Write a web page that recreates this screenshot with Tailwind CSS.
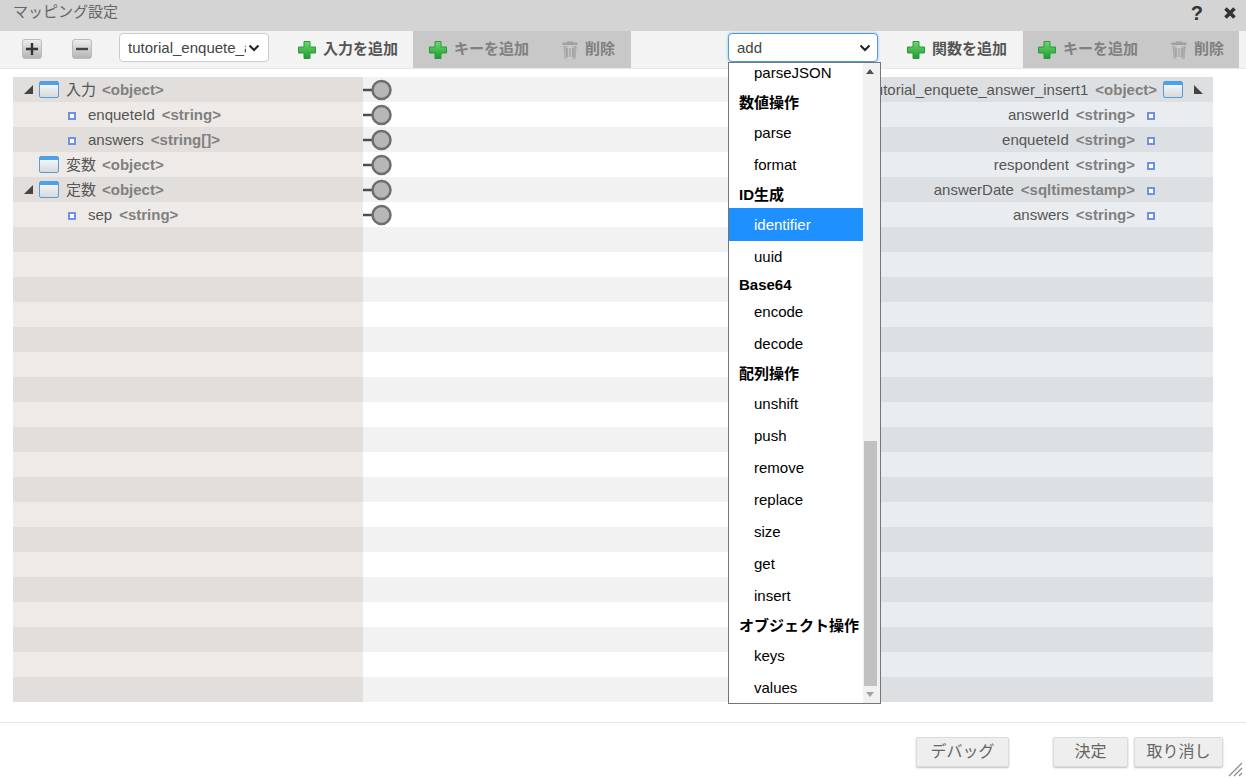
<!DOCTYPE html>
<html lang="ja">

<head>
  <meta charset="UTF-8" />
  <title>マッピング設定</title>
  <script src="https://cdn.jsdelivr.net/npm/@tailwindcss/browser@4"></script>
</head>

<body class="bg-white">
  <svg class="absolute w-0 h-0">
    <defs>
      <linearGradient id="plusFill" x1="0" y1="0" x2="0" y2="1">
        <stop offset="0" stop-color="#6fd86a" />
        <stop offset="1" stop-color="#1d9a35" />
      </linearGradient>
      <linearGradient id="winFill" x1="0" y1="0" x2="0" y2="1">
        <stop offset="0" stop-color="#fbfcfd" />
        <stop offset="1" stop-color="#d5d9dd" />
      </linearGradient>
      <linearGradient id="trashFill" x1="0" y1="0" x2="1" y2="0">
        <stop offset="0" stop-color="#a5a5a5" />
        <stop offset="0.5" stop-color="#d3d3d3" />
        <stop offset="1" stop-color="#a0a0a0" />
      </linearGradient>
      <symbol id="plus" viewBox="0 0 18 18">
        <path d="M6 .5h6v5.500h5.500v6H12v5.500H6V12H.5V6H6z" fill="url(#plusFill)" stroke="#2a9a3a" stroke-width="1" />
      </symbol>
      <symbol id="trash" viewBox="0 0 18 18">
        <path d="M6 1.500V.5h6v1h4.500V4h-15V1.500z" fill="#a0a0a0" />
        <path d="M2.500 5h13l-1 13h-11z" fill="url(#trashFill)" />
        <path d="M6 7v9M9 7v9M12 7v9" stroke="#8f8f8f" stroke-width="1" />
      </symbol>
      <symbol id="win" viewBox="0 0 20 17">
        <rect x="0.500" y="0.500" width="19" height="16" rx="1.500" fill="url(#winFill)" stroke="#5b9bd5" />
        <rect x="1" y="1" width="18" height="3" fill="#4aa3ea" />
      </symbol>
      <symbol id="sq" viewBox="0 0 8 8">
        <rect x="1" y="1" width="6" height="6" fill="#fff" stroke="#6f8fe8" stroke-width="2" />
      </symbol>
      <symbol id="knob" viewBox="0 0 29 22">
        <path d="M0 11h10" stroke="#4a5052" stroke-width="2.500" />
        <circle cx="18.500" cy="11" r="9" fill="#b7b7b7" stroke="#6e6e6e" stroke-width="2.500" />
      </symbol>
    </defs>
  </svg>

  <div class="w-[1246px] h-[780px] relative overflow-hidden font-['Liberation_Sans','Noto_Sans_CJK_JP',sans-serif] text-[15px] text-[#555]">

    <!-- Title bar -->
    <div class="h-[31px] bg-[#d4d4d4] flex items-center pl-[13px] pb-[9px]">
      <span class="text-[15px] text-[#666] leading-none">マッピング設定</span>
      <span class="ml-auto mr-[20px] text-[20px] font-bold text-[#333] leading-none mt-[3px]">?</span>
      <svg class="w-[14px] h-[14px] mr-[9px] mt-[3px]" viewBox="0 0 14 14"><path d="M2.500 2.500l9 9M11.500 2.500l-9 9" stroke="#333" stroke-width="3.600" /></svg>
    </div>

    <!-- Toolbar -->
    <div class="h-[38px] bg-[#f3f3f3] border-b border-[#e8e8e8] flex items-start font-bold">
      <button class="ml-[22px] mt-[8px] w-[20px] h-[20px] rounded-[3px] bg-gradient-to-b from-[#eeeeee] to-[#b4b4b4] border border-[#bbb] flex items-center justify-center">
        <svg class="w-[12px] h-[12px]" viewBox="0 0 12 12"><path d="M6 0v12M0 6h12" stroke="#333" stroke-width="2.400" /></svg>
      </button>
      <button class="ml-[30px] mt-[8px] w-[20px] h-[20px] rounded-[3px] bg-gradient-to-b from-[#eeeeee] to-[#b4b4b4] border border-[#bbb] flex items-center justify-center">
        <svg class="w-[12px] h-[12px]" viewBox="0 0 12 12"><path d="M0 6h12" stroke="#444" stroke-width="2.400" /></svg>
      </button>
      <div class="ml-[27px] mt-[2px] w-[150px] h-[29px] bg-white border border-[#ccc] rounded-[4px] flex items-center pl-[8px] font-normal text-[#444] overflow-hidden">
        <span class="w-[118px] overflow-hidden whitespace-nowrap pt-[1px]">tutorial_enquete_answer</span>
        <svg class="w-[12px] h-[8px] ml-[2px]" viewBox="0 0 12 8"><path d="M1.500 1.500L6 6l4.500-4.500" fill="none" stroke="#222" stroke-width="2" /></svg>
      </div>
      <div class="ml-[29px] w-[115px] h-[37px] flex items-center">
        <svg class="w-[18px] h-[18px] mr-[7px]"><use href="#plus" /></svg>
        <span class="text-[#555]">入力を追加</span>
      </div>
      <div class="w-[218px] h-[37px] bg-[#c8c8c8] flex items-center pl-[16px] text-[#808080]">
        <svg class="w-[18px] h-[18px] mr-[7px]"><use href="#plus" /></svg>
        <span>キーを追加</span>
        <svg class="w-[18px] h-[18px] ml-[32px] mr-[6px]"><use href="#trash" /></svg>
        <span>削除</span>
      </div>
      <div class="ml-[97px] mt-[2px] w-[150px] h-[29px] bg-white border border-[#4a9be8] shadow-[0_0_3px_#8cc4f5] rounded-[4px] flex items-center pl-[8px] pr-[6px] font-normal text-[#444]">
        <span class="pt-[1px]">add</span>
        <svg class="w-[12px] h-[8px] ml-auto" viewBox="0 0 12 8"><path d="M1.500 1.500L6 6l4.500-4.500" fill="none" stroke="#222" stroke-width="2" /></svg>
      </div>
      <div class="ml-[29px] w-[116px] h-[37px] flex items-center">
        <svg class="w-[18px] h-[18px] mr-[7px]"><use href="#plus" /></svg>
        <span class="text-[#555]">関数を追加</span>
      </div>
      <div class="w-[216px] h-[37px] bg-[#c8c8c8] flex items-center pl-[15px] text-[#808080]">
        <svg class="w-[18px] h-[18px] mr-[7px]"><use href="#plus" /></svg>
        <span>キーを追加</span>
        <svg class="w-[18px] h-[18px] ml-[32px] mr-[6px]"><use href="#trash" /></svg>
        <span>削除</span>
      </div>
    </div>

    <!-- Mapping rows -->
    <div class="mt-[8px] mx-[13px] w-[1200px] flex flex-col">
      <div class="group flex h-[25px]">
        <div class="w-[350px] flex items-center pt-[2px] bg-[#eeeae7] group-odd:bg-[#e2dedb]">
          <svg class="w-[9px] h-[9px] ml-[11px] mr-[6px] -mt-[2px]" viewBox="0 0 9 9"><path d="M9 0v9H0z" fill="#444" /></svg>
          <svg class="w-[20px] h-[17px] mr-[7px] -mt-[2px]"><use href="#win" /></svg>
          <span>入力</span><b class="ml-[6px] text-[#808080]">&lt;object&gt;</b>
        </div>
        <div class="flex-1 bg-white group-odd:bg-[#f2f2f2] flex items-center"><svg class="w-[29px] h-[22px]"><use href="#knob" /></svg></div>
        <div class="w-[350px] flex items-center justify-end pt-[2px] whitespace-nowrap bg-[#e9edf0] group-odd:bg-[#dde0e2]">
          <span>tutorial_enquete_answer_insert1</span><b class="ml-[7px] text-[#808080]">&lt;object&gt;</b>
          <svg class="w-[20px] h-[17px] ml-[6px] -mt-[2px]"><use href="#win" /></svg>
          <svg class="w-[9px] h-[9px] ml-[11px] mr-[10px] -mt-[2px]" viewBox="0 0 9 9"><path d="M0 0v9h9z" fill="#444" /></svg>
        </div>
      </div>
      <div class="group flex h-[25px]">
        <div class="w-[350px] flex items-center pt-[2px] bg-[#eeeae7] group-odd:bg-[#e2dedb] pl-[55px]">
          <svg class="w-[8px] h-[8px] mr-[12px]"><use href="#sq" /></svg>
          <span>enqueteId</span><b class="ml-[7px] text-[#808080]">&lt;string&gt;</b>
        </div>
        <div class="flex-1 bg-white group-odd:bg-[#f2f2f2] flex items-center"><svg class="w-[29px] h-[22px]"><use href="#knob" /></svg></div>
        <div class="w-[350px] flex items-center justify-end pt-[2px] bg-[#e9edf0] group-odd:bg-[#dde0e2] pr-[58px]">
          <span>answerId</span><b class="ml-[7px] text-[#808080]">&lt;string&gt;</b>
          <svg class="w-[8px] h-[8px] ml-[12px]"><use href="#sq" /></svg>
        </div>
      </div>
      <div class="group flex h-[25px]">
        <div class="w-[350px] flex items-center pt-[2px] bg-[#eeeae7] group-odd:bg-[#e2dedb] pl-[55px]">
          <svg class="w-[8px] h-[8px] mr-[12px]"><use href="#sq" /></svg>
          <span>answers</span><b class="ml-[7px] text-[#808080]">&lt;string[]&gt;</b>
        </div>
        <div class="flex-1 bg-white group-odd:bg-[#f2f2f2] flex items-center"><svg class="w-[29px] h-[22px]"><use href="#knob" /></svg></div>
        <div class="w-[350px] flex items-center justify-end pt-[2px] bg-[#e9edf0] group-odd:bg-[#dde0e2] pr-[58px]">
          <span>enqueteId</span><b class="ml-[7px] text-[#808080]">&lt;string&gt;</b>
          <svg class="w-[8px] h-[8px] ml-[12px]"><use href="#sq" /></svg>
        </div>
      </div>
      <div class="group flex h-[25px]">
        <div class="w-[350px] flex items-center pt-[2px] bg-[#eeeae7] group-odd:bg-[#e2dedb] pl-[26px]">
          <svg class="w-[20px] h-[17px] mr-[7px] -mt-[2px]"><use href="#win" /></svg>
          <span>変数</span><b class="ml-[6px] text-[#808080]">&lt;object&gt;</b>
        </div>
        <div class="flex-1 bg-white group-odd:bg-[#f2f2f2] flex items-center"><svg class="w-[29px] h-[22px]"><use href="#knob" /></svg></div>
        <div class="w-[350px] flex items-center justify-end pt-[2px] bg-[#e9edf0] group-odd:bg-[#dde0e2] pr-[58px]">
          <span>respondent</span><b class="ml-[7px] text-[#808080]">&lt;string&gt;</b>
          <svg class="w-[8px] h-[8px] ml-[12px]"><use href="#sq" /></svg>
        </div>
      </div>
      <div class="group flex h-[25px]">
        <div class="w-[350px] flex items-center pt-[2px] bg-[#eeeae7] group-odd:bg-[#e2dedb]">
          <svg class="w-[9px] h-[9px] ml-[11px] mr-[6px] -mt-[2px]" viewBox="0 0 9 9"><path d="M9 0v9H0z" fill="#444" /></svg>
          <svg class="w-[20px] h-[17px] mr-[7px] -mt-[2px]"><use href="#win" /></svg>
          <span>定数</span><b class="ml-[6px] text-[#808080]">&lt;object&gt;</b>
        </div>
        <div class="flex-1 bg-white group-odd:bg-[#f2f2f2] flex items-center"><svg class="w-[29px] h-[22px]"><use href="#knob" /></svg></div>
        <div class="w-[350px] flex items-center justify-end pt-[2px] bg-[#e9edf0] group-odd:bg-[#dde0e2] pr-[58px]">
          <span>answerDate</span><b class="ml-[7px] text-[#808080]">&lt;sqltimestamp&gt;</b>
          <svg class="w-[8px] h-[8px] ml-[12px]"><use href="#sq" /></svg>
        </div>
      </div>
      <div class="group flex h-[25px]">
        <div class="w-[350px] flex items-center pt-[2px] bg-[#eeeae7] group-odd:bg-[#e2dedb] pl-[55px]">
          <svg class="w-[8px] h-[8px] mr-[12px]"><use href="#sq" /></svg>
          <span>sep</span><b class="ml-[7px] text-[#808080]">&lt;string&gt;</b>
        </div>
        <div class="flex-1 bg-white group-odd:bg-[#f2f2f2] flex items-center"><svg class="w-[29px] h-[22px]"><use href="#knob" /></svg></div>
        <div class="w-[350px] flex items-center justify-end pt-[2px] bg-[#e9edf0] group-odd:bg-[#dde0e2] pr-[58px]">
          <span>answers</span><b class="ml-[7px] text-[#808080]">&lt;string&gt;</b>
          <svg class="w-[8px] h-[8px] ml-[12px]"><use href="#sq" /></svg>
        </div>
      </div>
      <!-- empty rows -->
      <div class="group flex h-[25px]"><div class="w-[350px] bg-[#eeeae7] group-odd:bg-[#e2dedb]"></div><div class="flex-1 bg-white group-odd:bg-[#f2f2f2]"></div><div class="w-[350px] bg-[#e9edf0] group-odd:bg-[#dde0e2]"></div></div>
      <div class="group flex h-[25px]"><div class="w-[350px] bg-[#eeeae7] group-odd:bg-[#e2dedb]"></div><div class="flex-1 bg-white group-odd:bg-[#f2f2f2]"></div><div class="w-[350px] bg-[#e9edf0] group-odd:bg-[#dde0e2]"></div></div>
      <div class="group flex h-[25px]"><div class="w-[350px] bg-[#eeeae7] group-odd:bg-[#e2dedb]"></div><div class="flex-1 bg-white group-odd:bg-[#f2f2f2]"></div><div class="w-[350px] bg-[#e9edf0] group-odd:bg-[#dde0e2]"></div></div>
      <div class="group flex h-[25px]"><div class="w-[350px] bg-[#eeeae7] group-odd:bg-[#e2dedb]"></div><div class="flex-1 bg-white group-odd:bg-[#f2f2f2]"></div><div class="w-[350px] bg-[#e9edf0] group-odd:bg-[#dde0e2]"></div></div>
      <div class="group flex h-[25px]"><div class="w-[350px] bg-[#eeeae7] group-odd:bg-[#e2dedb]"></div><div class="flex-1 bg-white group-odd:bg-[#f2f2f2]"></div><div class="w-[350px] bg-[#e9edf0] group-odd:bg-[#dde0e2]"></div></div>
      <div class="group flex h-[25px]"><div class="w-[350px] bg-[#eeeae7] group-odd:bg-[#e2dedb]"></div><div class="flex-1 bg-white group-odd:bg-[#f2f2f2]"></div><div class="w-[350px] bg-[#e9edf0] group-odd:bg-[#dde0e2]"></div></div>
      <div class="group flex h-[25px]"><div class="w-[350px] bg-[#eeeae7] group-odd:bg-[#e2dedb]"></div><div class="flex-1 bg-white group-odd:bg-[#f2f2f2]"></div><div class="w-[350px] bg-[#e9edf0] group-odd:bg-[#dde0e2]"></div></div>
      <div class="group flex h-[25px]"><div class="w-[350px] bg-[#eeeae7] group-odd:bg-[#e2dedb]"></div><div class="flex-1 bg-white group-odd:bg-[#f2f2f2]"></div><div class="w-[350px] bg-[#e9edf0] group-odd:bg-[#dde0e2]"></div></div>
      <div class="group flex h-[25px]"><div class="w-[350px] bg-[#eeeae7] group-odd:bg-[#e2dedb]"></div><div class="flex-1 bg-white group-odd:bg-[#f2f2f2]"></div><div class="w-[350px] bg-[#e9edf0] group-odd:bg-[#dde0e2]"></div></div>
      <div class="group flex h-[25px]"><div class="w-[350px] bg-[#eeeae7] group-odd:bg-[#e2dedb]"></div><div class="flex-1 bg-white group-odd:bg-[#f2f2f2]"></div><div class="w-[350px] bg-[#e9edf0] group-odd:bg-[#dde0e2]"></div></div>
      <div class="group flex h-[25px]"><div class="w-[350px] bg-[#eeeae7] group-odd:bg-[#e2dedb]"></div><div class="flex-1 bg-white group-odd:bg-[#f2f2f2]"></div><div class="w-[350px] bg-[#e9edf0] group-odd:bg-[#dde0e2]"></div></div>
      <div class="group flex h-[25px]"><div class="w-[350px] bg-[#eeeae7] group-odd:bg-[#e2dedb]"></div><div class="flex-1 bg-white group-odd:bg-[#f2f2f2]"></div><div class="w-[350px] bg-[#e9edf0] group-odd:bg-[#dde0e2]"></div></div>
      <div class="group flex h-[25px]"><div class="w-[350px] bg-[#eeeae7] group-odd:bg-[#e2dedb]"></div><div class="flex-1 bg-white group-odd:bg-[#f2f2f2]"></div><div class="w-[350px] bg-[#e9edf0] group-odd:bg-[#dde0e2]"></div></div>
      <div class="group flex h-[25px]"><div class="w-[350px] bg-[#eeeae7] group-odd:bg-[#e2dedb]"></div><div class="flex-1 bg-white group-odd:bg-[#f2f2f2]"></div><div class="w-[350px] bg-[#e9edf0] group-odd:bg-[#dde0e2]"></div></div>
      <div class="group flex h-[25px]"><div class="w-[350px] bg-[#eeeae7] group-odd:bg-[#e2dedb]"></div><div class="flex-1 bg-white group-odd:bg-[#f2f2f2]"></div><div class="w-[350px] bg-[#e9edf0] group-odd:bg-[#dde0e2]"></div></div>
      <div class="group flex h-[25px]"><div class="w-[350px] bg-[#eeeae7] group-odd:bg-[#e2dedb]"></div><div class="flex-1 bg-white group-odd:bg-[#f2f2f2]"></div><div class="w-[350px] bg-[#e9edf0] group-odd:bg-[#dde0e2]"></div></div>
      <div class="group flex h-[25px]"><div class="w-[350px] bg-[#eeeae7] group-odd:bg-[#e2dedb]"></div><div class="flex-1 bg-white group-odd:bg-[#f2f2f2]"></div><div class="w-[350px] bg-[#e9edf0] group-odd:bg-[#dde0e2]"></div></div>
      <div class="group flex h-[25px]"><div class="w-[350px] bg-[#eeeae7] group-odd:bg-[#e2dedb]"></div><div class="flex-1 bg-white group-odd:bg-[#f2f2f2]"></div><div class="w-[350px] bg-[#e9edf0] group-odd:bg-[#dde0e2]"></div></div>
      <div class="group flex h-[25px]"><div class="w-[350px] bg-[#eeeae7] group-odd:bg-[#e2dedb]"></div><div class="flex-1 bg-white group-odd:bg-[#f2f2f2]"></div><div class="w-[350px] bg-[#e9edf0] group-odd:bg-[#dde0e2]"></div></div>
    </div>

    <!-- Footer -->
    <div class="mt-[20px] border-t border-[#e8e8e8] pt-[14px] pr-[23px] flex justify-end">
      <button class="w-[93px] h-[30px] bg-[#eeeeee] border border-[#dcdcdc] rounded-[2px] shadow-[0_1px_2px_rgba(0,0,0,0.25)] text-[16px] text-[#666]">デバッグ</button>
      <button class="ml-[44px] w-[75px] h-[30px] bg-[#eeeeee] border border-[#dcdcdc] rounded-[2px] shadow-[0_1px_2px_rgba(0,0,0,0.25)] text-[16px] text-[#666]">決定</button>
      <button class="ml-[6px] w-[89px] h-[30px] bg-[#eeeeee] border border-[#dcdcdc] rounded-[2px] shadow-[0_1px_2px_rgba(0,0,0,0.25)] text-[16px] text-[#666]">取り消し</button>
    </div>
    <svg class="absolute right-[3px] bottom-[3px] w-[15px] h-[15px]" viewBox="0 0 15 15"><path d="M1 14L14 1M6 14l8-8M11 14l3-3" stroke="#8a8a8a" stroke-width="1.200" /></svg>

    <!-- Open select dropdown -->
    <div class="absolute left-[728px] top-[62px] w-[153px] h-[642px] bg-white border border-[#767676] flex overflow-hidden text-black">
      <ul class="w-[134px] shrink-0 -mt-[6px]">
        <li class="h-[32px] leading-[32px] pl-[25px]">parseJSON</li>
        <li class="h-[28px] leading-[28px] pl-[10px] font-bold">数値操作</li>
        <li class="h-[32px] leading-[32px] pl-[25px]">parse</li>
        <li class="h-[32px] leading-[32px] pl-[25px]">format</li>
        <li class="h-[27px] leading-[28px] pl-[10px] font-bold">ID生成</li>
        <li class="h-[33px] leading-[33px] pl-[25px] bg-[#1e90ff] text-white">identifier</li>
        <li class="h-[32px] leading-[32px] pl-[25px]">uuid</li>
        <li class="h-[23px] leading-[23px] pl-[10px] font-bold">Base64</li>
        <li class="h-[32px] leading-[32px] pl-[25px]">encode</li>
        <li class="h-[32px] leading-[32px] pl-[25px]">decode</li>
        <li class="h-[28px] leading-[28px] pl-[10px] font-bold">配列操作</li>
        <li class="h-[32px] leading-[32px] pl-[25px]">unshift</li>
        <li class="h-[32px] leading-[32px] pl-[25px]">push</li>
        <li class="h-[32px] leading-[32px] pl-[25px]">remove</li>
        <li class="h-[32px] leading-[32px] pl-[25px]">replace</li>
        <li class="h-[32px] leading-[32px] pl-[25px]">size</li>
        <li class="h-[32px] leading-[32px] pl-[25px]">get</li>
        <li class="h-[32px] leading-[32px] pl-[25px]">insert</li>
        <li class="h-[28px] leading-[28px] pl-[10px] font-bold whitespace-nowrap">オブジェクト操作</li>
        <li class="h-[32px] leading-[32px] pl-[25px]">keys</li>
        <li class="h-[32px] leading-[32px] pl-[25px]">values</li>
      </ul>
      <!-- scrollbar -->
      <div class="relative flex-1 bg-[#f1f1f1]">
        <svg class="absolute left-[3px] top-[6px] w-[8px] h-[5px]" viewBox="0 0 8 5"><path d="M4 0l4 5H0z" fill="#505050" /></svg>
        <div class="absolute left-[1px] top-[378px] w-[13px] h-[245px] bg-[#c1c1c1]"></div>
        <svg class="absolute left-[3px] bottom-[6px] w-[8px] h-[5px]" viewBox="0 0 8 5"><path d="M0 0h8L4 5z" fill="#a3a3a3" /></svg>
      </div>
    </div>
  </div>
</body>

</html>
